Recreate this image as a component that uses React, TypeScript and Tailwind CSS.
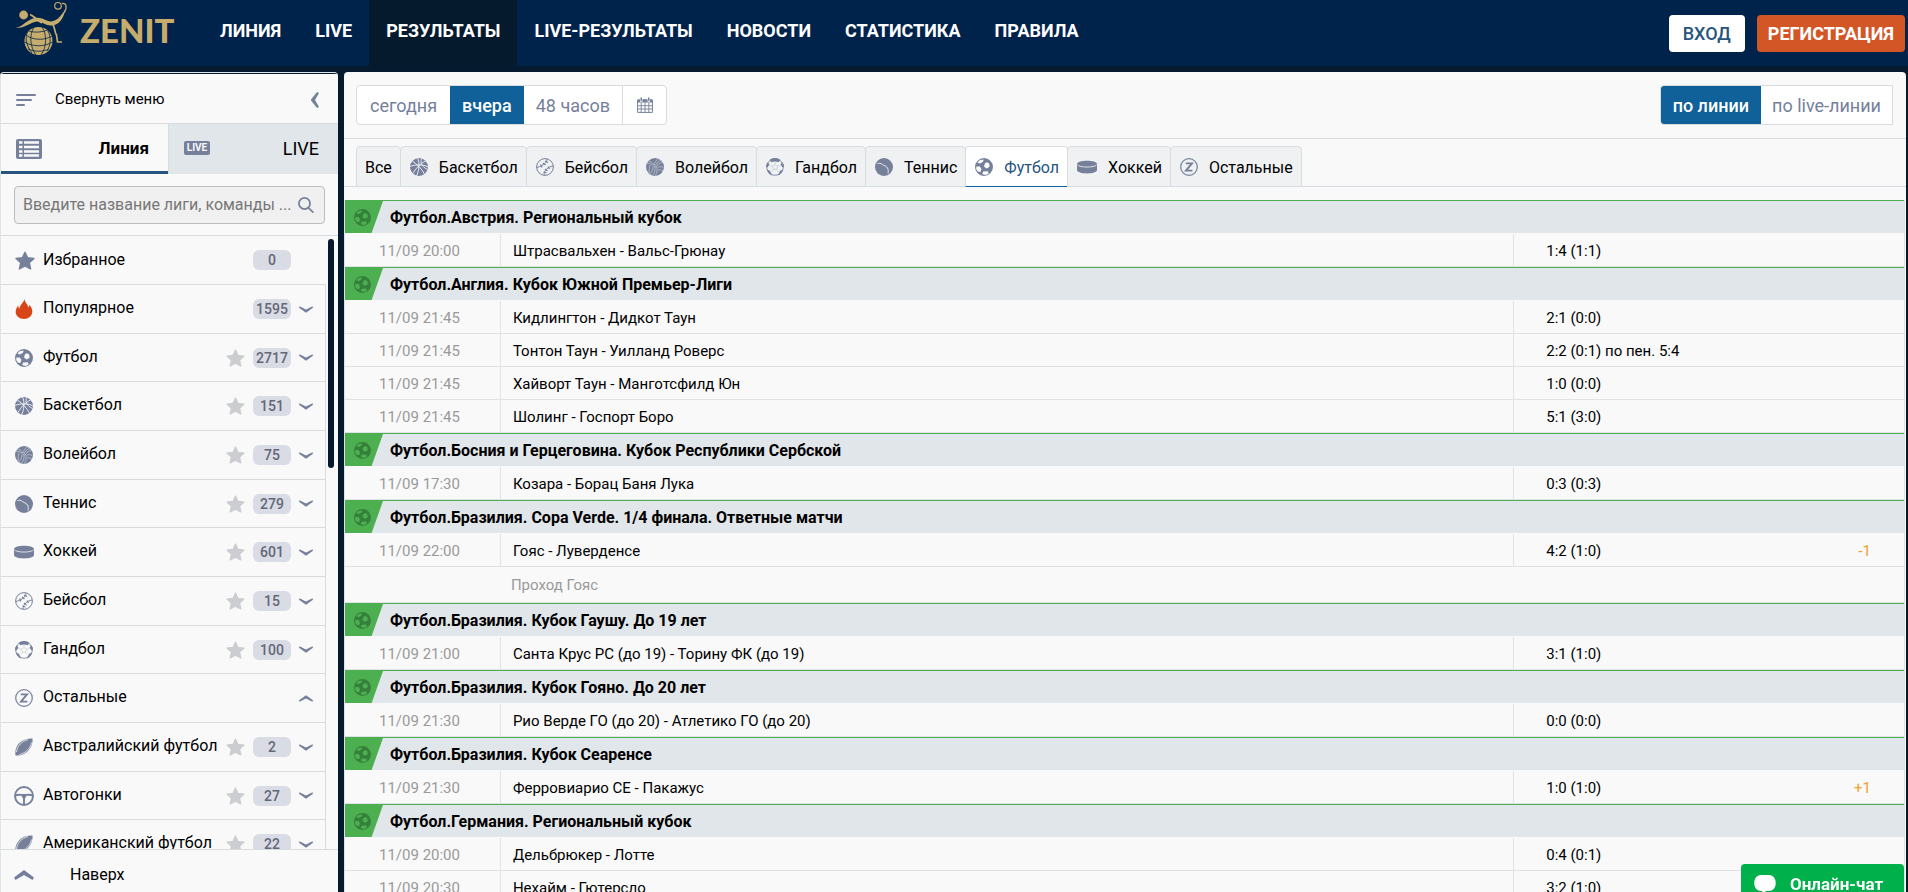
import React from 'react';
import { clsx } from 'clsx';

type IconProps = { className?: string };

const FootballIcon = ({ className }: IconProps) => (
  <svg className={className} viewBox="0 0 18 18" fill="currentColor" fillRule="evenodd">
    <path d="M9 0a9 9 0 1 1 0 18A9 9 0 0 1 9 0ZM10 5.2 9 8.4l2.6 2 3-1.6-.4-3.2-2.2-1.3ZM4.6 2.2 2.4 4.6 5 5.4 8 3.8 8.6 1.6ZM1.4 8.4 1.2 11l1.6 2.4 2.6.6 1-3-1.6-2.4ZM8 13.6l-.6 2.6 3.6.8 2.6-1.6-.8-2.2Z" />
  </svg>
);

const BasketballIcon = ({ className }: IconProps) => (
  <svg className={className} viewBox="0 0 18 18" fill="none">
    <circle cx="9" cy="9" r="9" fill="currentColor" />
    <g stroke="#f3f4f6" strokeWidth="0.9">
      <path d="M2.2 3C7 6 12 11 14.500 16.200" />
      <path d="M15.500 3C11 5 5 11 3 15.600" />
      <path d="M7.500 0C10 5 9 13 6.500 18" />
      <path d="M0 8.500C5 6.500 13 6 18 9" />
      <path d="M11.500 0.500C10 5 12 9 17.500 11.500" />
    </g>
  </svg>
);

const BaseballIcon = ({ className }: IconProps) => (
  <svg className={className} viewBox="0 0 18 18" fill="none" stroke="currentColor">
    <circle cx="9" cy="9" r="8.4" strokeWidth="1" />
    <path d="M11 1C11 5 8 7 1 9.600M17 8C12 9 8 12 8 17" strokeWidth="1" />
    <path d="M9 3l3 1.500M7 5l2.500 2M4.500 6.500l1.500 3M9 11l2.500 2M12 8.500l1.500 2.500M7.500 14l3 1" strokeWidth="1.200" />
  </svg>
);

const VolleyballIcon = ({ className }: IconProps) => (
  <svg className={className} viewBox="0 0 18 18" fill="none">
    <circle cx="9" cy="9" r="9" fill="currentColor" />
    <g stroke="#c9cdd7" strokeWidth="0.7">
      <path d="M9 9C6 6 3 5 1 5.500M8 7C6 4 4 3 2.500 3.500M9 9c1-4 4-7 7-6.500M8 7c1-3 3-6 5-6.500M10 9.500c1-3 4-5 6.700-5" />
      <path d="M9 9c.5 4-1 7-3 8.500M11 9c.5 4-.5 7-2 9M7 8.500c0 4-1.500 6-3.500 7.500M12 9c3-1 5 0 6 1.500M12 12c2-.5 3.500 0 5 1M4 7c-1 3-1 6-.5 8" />
    </g>
  </svg>
);

const HandballIcon = ({ className }: IconProps) => (
  <svg className={className} viewBox="0 0 18 18" fill="none">
    <circle cx="9" cy="9" r="8.300" stroke="currentColor" strokeWidth="0.8" />
    <g fill="currentColor">
      <path d="M3.500 2C7-.6 11-.6 14.500 2L12.500 4.200C10 3.200 8 3.200 5.500 4.200Z" />
      <path d="M.3 6.500 2 4 3.200 6.500 1.800 9.200H.1Z" />
      <path d="M17.700 6.500 16 4 14.800 6.500l1.400 2.700h1.700Z" />
      <path d="M.8 11.500l3 1.200 2.500 4.700C3.500 16.800 1.400 14.500.8 11.500Z" />
      <path d="M17.200 11.500l-3 1.200-2.500 4.700c2.800-.6 4.900-2.900 5.500-5.900Z" />
    </g>
    <path d="M9 6.500l2.500 1.800-1 3h-3l-1-3ZM9 3.400v3.100M11.500 8.300l4-1.300M10.500 11.300l2.500 2.500M7.500 11.300 5 13.800M6.500 8.300l-4-1.300" stroke="currentColor" strokeOpacity="0.35" strokeWidth="0.700" />
  </svg>
);

const TennisIcon = ({ className }: IconProps) => (
  <svg className={className} viewBox="0 0 18 18" fill="none">
    <circle cx="9" cy="9" r="9" fill="currentColor" />
    <path d="M2.500 5.500C6 4.500 7 6.500 9 7.500C12 8.500 14 10.500 13 15.500" stroke="#f3f4f6" strokeWidth="0.900" />
  </svg>
);

const HockeyIcon = ({ className }: IconProps) => (
  <svg className={className} viewBox="0 0 20 18" fill="none">
    <path d="M0 6C0 1.500 20 1.500 20 6v6c0 4.500-20 4.500-20 0Z" fill="currentColor" />
    <path d="M.5 6.800c1.500 3 17.500 3 19 0" stroke="#e6e8ec" strokeWidth="0.900" />
  </svg>
);

const OtherIcon = ({ className }: IconProps) => (
  <svg className={className} viewBox="0 0 18 18" fill="none" stroke="currentColor">
    <circle cx="9" cy="9" r="8.300" strokeWidth="1.200" />
    <path d="M5.800 5.400H12L6 12.600h6.400" strokeWidth="1.900" />
  </svg>
);

const RugbyIcon = ({ className }: IconProps) => (
  <svg className={className} viewBox="0 0 18 18" fill="none">
    <path d="M.5 17.500C-1 8 6 0 17.500.5 18.500 9 11 18.500.5 17.500Z" fill="currentColor" />
    <path d="M1.500 14C2 8 7 3 13 1.600M4.500 16.500C11 15 15.500 10 16.500 4.500" stroke="#f3f4f6" strokeWidth="0.800" />
  </svg>
);

const WheelIcon = ({ className }: IconProps) => (
  <svg className={className} viewBox="0 0 20 20" fill="none" stroke="currentColor">
    <circle cx="10" cy="10" r="9" strokeWidth="1.900" />
    <path d="M1 9.500C5 8 7 9 10 9s5-1 9 .5M10 10v9" strokeWidth="1.900" />
    <circle cx="10" cy="10" r="2.300" fill="currentColor" stroke="none" />
  </svg>
);

const StarIcon = ({ className }: IconProps) => (
  <svg className={className} viewBox="0 0 20 19" fill="currentColor" stroke="currentColor" strokeWidth="1.400" strokeLinejoin="round">
    <path d="M10 1.200l2.600 5.600 6.400.7-4.700 4.200 1.300 6.200L10 14.900l-5.600 3 1.300-6.200L1 7.500l6.400-.7Z" />
  </svg>
);

const FireIcon = ({ className }: IconProps) => (
  <svg className={className} viewBox="0 0 18 20" fill="#da4419">
    <path d="M9.500 0C10 4 13 5 13.200 8.500c.8-.6 1-1.600.9-2.800C16.500 8 17.500 10.500 17.300 13c-.3 4-3.800 7-8.300 7s-8.300-3-8.300-7c0-2.700 1.300-4.800 2.500-6.500.1 1.500.4 2.500 1.200 3.200C4.800 6 8.500 4 9.500 0Z" />
  </svg>
);

const ChevronIcon = ({ className }: IconProps) => (
  <svg className={className} viewBox="0 0 14 7" fill="#76809b">
    <path d="M.5.300 7 3.600 13.500.300 14 1.800 7 6.700 0 1.800Z" />
  </svg>
);

const CalendarIcon = ({ className }: IconProps) => (
  <svg className={className} viewBox="0 0 16 16" fill="none" stroke="currentColor">
    <path d="M.6 3.200h14.800V15.400H.6Z" strokeWidth="1" />
    <path d="M.6 2.200h14.800V5.500H.6Z" fill="currentColor" stroke="none" />
    <path d="M4.200 5.500v10M8 5.500v10M11.800 5.500v10M.6 8.700h14.800M.6 12h14.800" strokeWidth="0.900" />
    <path d="M4.200.800v3M11.800.800v3" stroke="#fff" strokeWidth="2.600" strokeLinecap="round" />
    <path d="M4.200.900v2.600M11.800.900v2.600" strokeWidth="1.500" strokeLinecap="round" />
  </svg>
);

const Logo = () => (
  <svg className="h-14 w-14" viewBox="14 0 56 56" fill="none" stroke="#c6ac6d">
    <circle cx="38.500" cy="41" r="14" fill="#c6ac6d" stroke="none" />
    <g stroke="#00234b" strokeWidth="0.8">
      <path d="M26 35c6 5 18 6 26 1M24.500 42c8 5 20 5 28 0M28 49c7 3 15 3 21 0" />
      <path d="M34 27c-5 8-4 20 2 28M42 27c5 7 5 20-1 28M28 31c-4 6-1 16 4 22M48 31c3 6 3 14-1 20M29 31c6 2 13 1 19-1" />
    </g>
    <circle cx="23.600" cy="15" r="4.400" fill="#c6ac6d" stroke="none" />
    <circle cx="58" cy="5.800" r="3.300" strokeWidth="1.200" />
    <path d="M16 27.500C23 27 27 19 36 17.800 42 17 46 21 51 21.500 58 21 62 14 65.500 9 64 18 59 25 52 25.500 46 26 42 21.500 37 21.500 30 22 25 29 16 27.500Z" fill="#c6ac6d" stroke="none" />
    <path d="M30 14.500C34 16 37 20 42 23" strokeWidth="1.800" />
    <path d="M62 3.500C67 3 67 7.500 64.500 12.500" strokeWidth="1.300" />
    <path d="M52.500 24c3 4 1.500 7 4 11l1 7H62" strokeWidth="1.700" />
  </svg>
);

const nav = ['ЛИНИЯ', 'LIVE', 'РЕЗУЛЬТАТЫ', 'LIVE-РЕЗУЛЬТАТЫ', 'НОВОСТИ', 'СТАТИСТИКА', 'ПРАВИЛА'];

const sports = [
  { name: 'Все' },
  { name: 'Баскетбол', icon: BasketballIcon },
  { name: 'Бейсбол', icon: BaseballIcon },
  { name: 'Волейбол', icon: VolleyballIcon },
  { name: 'Гандбол', icon: HandballIcon },
  { name: 'Теннис', icon: TennisIcon },
  { name: 'Футбол', icon: FootballIcon, active: true },
  { name: 'Хоккей', icon: HockeyIcon },
  { name: 'Остальные', icon: OtherIcon },
];

const menu = [
  { name: 'Популярное', icon: FireIcon, count: 1595 },
  { name: 'Футбол', icon: FootballIcon, count: 2717, star: true },
  { name: 'Баскетбол', icon: BasketballIcon, count: 151, star: true },
  { name: 'Волейбол', icon: VolleyballIcon, count: 75, star: true },
  { name: 'Теннис', icon: TennisIcon, count: 279, star: true },
  { name: 'Хоккей', icon: HockeyIcon, count: 601, star: true },
  { name: 'Бейсбол', icon: BaseballIcon, count: 15, star: true },
  { name: 'Гандбол', icon: HandballIcon, count: 100, star: true },
  { name: 'Остальные', icon: OtherIcon, open: true },
  { name: 'Австралийский футбол', icon: RugbyIcon, count: 2, star: true },
  { name: 'Автогонки', icon: WheelIcon, count: 27, star: true },
  { name: 'Американский футбол', icon: RugbyIcon, count: 22, star: true },
];

type Match = { time: string; teams: string; score: string; extra?: string; note?: string };

const leagues: { title: string; matches: Match[] }[] = [
  {
    title: 'Футбол.Австрия. Региональный кубок',
    matches: [{ time: '11/09 20:00', teams: 'Штрасвальхен - Вальс-Грюнау', score: '1:4 (1:1)' }],
  },
  {
    title: 'Футбол.Англия. Кубок Южной Премьер-Лиги',
    matches: [
      { time: '11/09 21:45', teams: 'Кидлингтон - Дидкот Таун', score: '2:1 (0:0)' },
      { time: '11/09 21:45', teams: 'Тонтон Таун - Уилланд Роверс', score: '2:2 (0:1) по пен. 5:4' },
      { time: '11/09 21:45', teams: 'Хайворт Таун - Манготсфилд Юн', score: '1:0 (0:0)' },
      { time: '11/09 21:45', teams: 'Шолинг - Госпорт Боро', score: '5:1 (3:0)' },
    ],
  },
  {
    title: 'Футбол.Босния и Герцеговина. Кубок Республики Сербской',
    matches: [{ time: '11/09 17:30', teams: 'Козара - Борац Баня Лука', score: '0:3 (0:3)' }],
  },
  {
    title: 'Футбол.Бразилия. Copa Verde. 1/4 финала. Ответные матчи',
    matches: [{ time: '11/09 22:00', teams: 'Гояс - Луверденсе', score: '4:2 (1:0)', extra: '-1', note: 'Проход Гояс' }],
  },
  {
    title: 'Футбол.Бразилия. Кубок Гаушу. До 19 лет',
    matches: [{ time: '11/09 21:00', teams: 'Санта Крус РС (до 19) - Торину ФК (до 19)', score: '3:1 (1:0)' }],
  },
  {
    title: 'Футбол.Бразилия. Кубок Гояно. До 20 лет',
    matches: [{ time: '11/09 21:30', teams: 'Рио Верде ГО (до 20) - Атлетико ГО (до 20)', score: '0:0 (0:0)' }],
  },
  {
    title: 'Футбол.Бразилия. Кубок Сеаренсе',
    matches: [{ time: '11/09 21:30', teams: 'Ферровиарио СЕ - Пакажус', score: '1:0 (1:0)', extra: '+1' }],
  },
  {
    title: 'Футбол.Германия. Региональный кубок',
    matches: [
      { time: '11/09 20:00', teams: 'Дельбрюкер - Лотте', score: '0:4 (0:1)' },
      { time: '11/09 20:30', teams: 'Нехайм - Гютерсло', score: '3:2 (1:0)' },
    ],
  },
];

const Header = () => (
  <header className="flex h-[66px] shrink-0 items-stretch bg-[#00234b] pr-[3px] pl-[14px]">
    <a href="#" className="flex w-[189px] items-start">
      <Logo />
      <span className="ml-[10px] pt-[9px] font-['Lato',sans-serif] text-[33px] leading-[42px] font-black text-[#c6ac6d]">ZENIT</span>
    </a>
    <nav className="flex">
      {nav.map((item) => (
        <a
          key={item}
          href="#"
          className={clsx(
            'px-[17px] pt-[19px] text-[18px] leading-6 font-bold text-white',
            item === 'РЕЗУЛЬТАТЫ' && 'bg-[#061a2e]',
          )}
        >
          {item}
        </a>
      ))}
    </nav>
    <div className="ml-auto flex items-start gap-3 pt-[15px]">
      <button className="h-[37px] rounded bg-white px-[14px] text-[18px] font-medium text-[#27557f]">ВХОД</button>
      <button className="h-[37px] rounded bg-[#d35626] px-[11px] text-[18px] font-bold text-white">РЕГИСТРАЦИЯ</button>
    </div>
  </header>
);

const Badge = ({ children }: { children: React.ReactNode }) => (
  <span className="ml-2 h-5 w-[38px] shrink-0 rounded-md bg-[#d9dce4] text-center text-sm leading-5 font-medium text-[#636777]">
    {children}
  </span>
);

const Sidebar = () => (
  <aside className="flex w-[338px] shrink-0 flex-col overflow-hidden rounded-t border-t border-l border-[#dfe4e9] bg-[#f9f9f9]">
    <button className="flex h-[51px] shrink-0 items-center border-t border-b border-t-[#05192f] border-b-[#d9dcdf] pt-0.5 pr-[19px] pl-[15px] text-[15px]">
      <svg className="h-3 w-5" viewBox="0 0 20 12" stroke="#76809b" strokeWidth="2" strokeLinecap="round">
        <path d="M1 1h18M1 6h14M1 11h7" />
      </svg>
      <span className="ml-[19px]">Свернуть меню</span>
      <svg className="ml-auto h-4 w-2" viewBox="0 0 8 16" fill="#76809b">
        <path d="M6 0 0 7.500v1L6 16l2-1-4-7 4-7Z" />
      </svg>
    </button>
    <div className="flex h-[50px] shrink-0">
      <button className="flex w-[167px] items-center justify-between border-b-3 border-[#27557f] pt-0.5 pr-[19px] pl-[15px] text-[17px] font-bold">
        <svg className="h-5 w-[26px]" viewBox="0 0 26 20" fill="none">
          <rect width="26" height="20" rx="2" fill="#76809b" />
          <path d="M3 3.500h3.500M8 3.500h15M3 8h3.500M8 8h15M3 12.500h3.500M8 12.500h15M3 16.500h3.500M8 16.500h15" stroke="#f9f9f9" strokeWidth="2.400" />
        </svg>
        Линия
      </button>
      <button className="flex flex-1 items-center justify-between border-l border-[#d9dcdf] bg-[#e1e6ea] pr-[19px] pb-0.5 pl-[15px] text-[18px]">
        <span className="h-[14px] w-[26px] rounded-xs bg-[#76809b] text-center text-[10px] leading-[14px] font-bold text-[#f9f9f9]">LIVE</span>
        LIVE
      </button>
    </div>
    <div className="shrink-0 border-b border-[#d9dcdf] px-[13px] pt-3 pb-[11px]">
      <label className="flex h-[38px] items-center rounded border border-[#bcbcbc] bg-[#f0f0f0] pr-[10px] pl-2">
        <input
          type="text"
          aria-label="Поиск"
          placeholder="Введите название лиги, команды ..."
          className="min-w-0 flex-1 text-base outline-none placeholder:text-[#777]"
        />
        <svg className="size-4 shrink-0" viewBox="0 0 16 16" fill="none" stroke="#76809b" strokeWidth="1.700">
          <circle cx="6.500" cy="6.500" r="5.600" />
          <path d="M10.500 10.800 15.400 15.600" />
        </svg>
      </label>
    </div>
    <div className="relative min-h-0 flex-1 overflow-hidden">
      <div className="w-[325px] text-base">
        <a href="#" className="flex h-[49px] items-center border-b border-[#d9dcdf] pr-[35px] pl-[14px]">
          <StarIcon className="h-[19px] w-5 text-[#76809b]" />
          <span className="mr-auto ml-2">Избранное</span>
          <Badge>0</Badge>
        </a>
        <ul className="border-r border-[#d9dcdf]">
          {menu.map(({ name, icon: Icon, count, star, open }) => (
            <li key={name} className="flex h-[49px] items-center border-b border-[#d9dcdf] pr-3 pl-[13px] nth-[3n+2]:h-12">
              <span className="flex w-5 justify-center text-[#76809b]">
                <Icon className={Icon === WheelIcon || Icon === HockeyIcon || Icon === FireIcon ? 'size-5' : 'size-[18px]'} />
              </span>
              <a href="#" className="mr-auto ml-[9px] pb-0.5 whitespace-nowrap">{name}</a>
              {star && <StarIcon className="h-[18px] w-[19px] shrink-0 text-[#cccdd1]" />}
              {count && <Badge>{count}</Badge>}
              <button aria-label={name} className="ml-2">
                <ChevronIcon className={clsx('h-[7px] w-[14px]', open && 'rotate-180')} />
              </button>
            </li>
          ))}
        </ul>
      </div>
      <div className="absolute top-[3px] right-1 h-[229px] w-[6px] rounded-full bg-[#05192f]" />
    </div>
    <a href="#" className="flex h-[43px] shrink-0 items-center border-t border-[#d9dcdf] pt-[7px] pl-[13px] text-base">
      <svg className="h-[10px] w-5" viewBox="0 0 20 10" fill="#76809b">
        <path d="M10 0 20 7.500 18.500 10 10 5 1.500 10 0 7.500Z" />
      </svg>
      <span className="ml-9">Наверх</span>
    </a>
  </aside>
);

const Filters = () => (
  <div className="flex justify-between border-b border-[#d9dcdf] py-[13px] pr-[13px] pl-3 text-[18px] text-[#76809b]">
    <div className="flex h-10 overflow-hidden rounded border border-[#d9dcdf] bg-white">
      <button className="px-[13px]">сегодня</button>
      <button className="bg-[#10609a] px-3 font-medium text-white">вчера</button>
      <button className="px-3">48 часов</button>
      <button aria-label="Календарь" className="w-11 border-l border-[#d9dcdf] pl-[14px]">
        <CalendarIcon className="size-4" />
      </button>
    </div>
    <div className="flex h-10 overflow-hidden rounded-l border border-[#d9dcdf] bg-white">
      <button className="bg-[#10609a] px-3 font-medium text-white">по линии</button>
      <button className="px-[11px]">по live-линии</button>
    </div>
  </div>
);

const SportTabs = () => (
  <div className="flex border-b border-[#d5dae0] pt-[7px] pl-3">
    {sports.map(({ name, icon: Icon, active }) => (
      <button
        key={name}
        className={clsx(
          '-mr-px -mb-px flex h-[41px] items-center rounded-t border text-base',
          Icon ? 'gap-[11px] pr-2 pl-[9px]' : 'px-2',
          active ? 'border-[#d9dcdf] border-b-[#10609a] bg-white text-[#27557f]' : 'border-[#d9dcdf] bg-[#eff1f3]',
        )}
      >
        {Icon && <Icon className={clsx('h-[18px] text-[#76809b]', Icon === HockeyIcon ? 'w-5' : 'w-[18px]')} />}
        <span className="pt-0.5">{name}</span>
      </button>
    ))}
  </div>
);

const Results = () => (
  <div className="pt-[13px] pr-px">
    <table className="w-full table-fixed border-separate border-spacing-0 border-x border-[#dfe1e3] text-left text-[15px]">
      <colgroup>
        <col className="w-[10%]" />
        <col className="w-[65%]" />
        <col className="w-[20%]" />
        <col className="w-[5%]" />
      </colgroup>
      {leagues.map(({ title, matches }) => (
        <tbody key={title}>
          <tr>
            <th colSpan={4} scope="colgroup" className="h-[34px] border-t border-b border-t-[#4caf50] border-b-[#f9f9f9] bg-[#e1e6ea] p-0 text-base font-bold">
              <div className="flex h-8 items-center gap-[7px]">
                <span className="flex h-8 w-[38px] items-center bg-[#4caf50] pl-[9px] text-[#35803a] [clip-path:polygon(0_0,100%_0,70%_100%,0_100%)]">
                  <FootballIcon className="size-[17px]" />
                </span>
                <span className="pt-0.5">{title}</span>
              </div>
            </th>
          </tr>
          {matches.map((m) => (
            <React.Fragment key={m.teams}>
              <tr>
                <td className="h-[33px] border-r border-b border-[#e0e3e6] p-0 pt-0.5 pl-[34px] text-[#999]">{m.time}</td>
                <td className="border-r border-b border-[#e0e3e6] p-0 pt-0.5 pl-3">{m.teams}</td>
                <td className="border-b border-[#e0e3e6] p-0 pt-0.5 pl-8 whitespace-nowrap">{m.score}</td>
                <td className="border-b border-[#e0e3e6] p-0 pt-0.5 pr-[33px] text-right text-[#f0a030]">{m.extra}</td>
              </tr>
              {m.note && (
                <tr>
                  <td className="h-9 border-b border-[#e0e3e6] p-0" />
                  <td colSpan={3} className="border-b border-[#e0e3e6] p-0 pt-0.5 pl-[10px] text-[#999]">{m.note}</td>
                </tr>
              )}
            </React.Fragment>
          ))}
        </tbody>
      ))}
    </table>
  </div>
);

const App = () => (
  <div className="flex h-screen flex-col overflow-hidden bg-[#05192f] font-['Roboto',sans-serif] text-black">
    <Header />
    <div className="flex min-h-0 flex-1 gap-[6px] pt-[6px] pr-[2px]">
      <Sidebar />
      <main className="min-w-0 flex-1 overflow-hidden rounded-t bg-[#f9f9f9]">
        <Filters />
        <SportTabs />
        <Results />
      </main>
    </div>
    <button className="fixed right-1 bottom-0 flex h-7 w-[163px] items-start gap-[14px] rounded-t bg-[#00b04a] pt-2 pl-[13px] text-[17px] font-bold text-white">
      <svg className="mt-[3px] h-[18px] w-[22px] shrink-0" viewBox="0 0 22 18" fill="#fff">
        <path d="M7 0h8c9 0 9 16 0 16h-3l-4 3 .3-3H7C-2 16-2 0 7 0Z" />
      </svg>
      <span className="leading-6">Онлайн-чат</span>
    </button>
  </div>
);

export default App;
